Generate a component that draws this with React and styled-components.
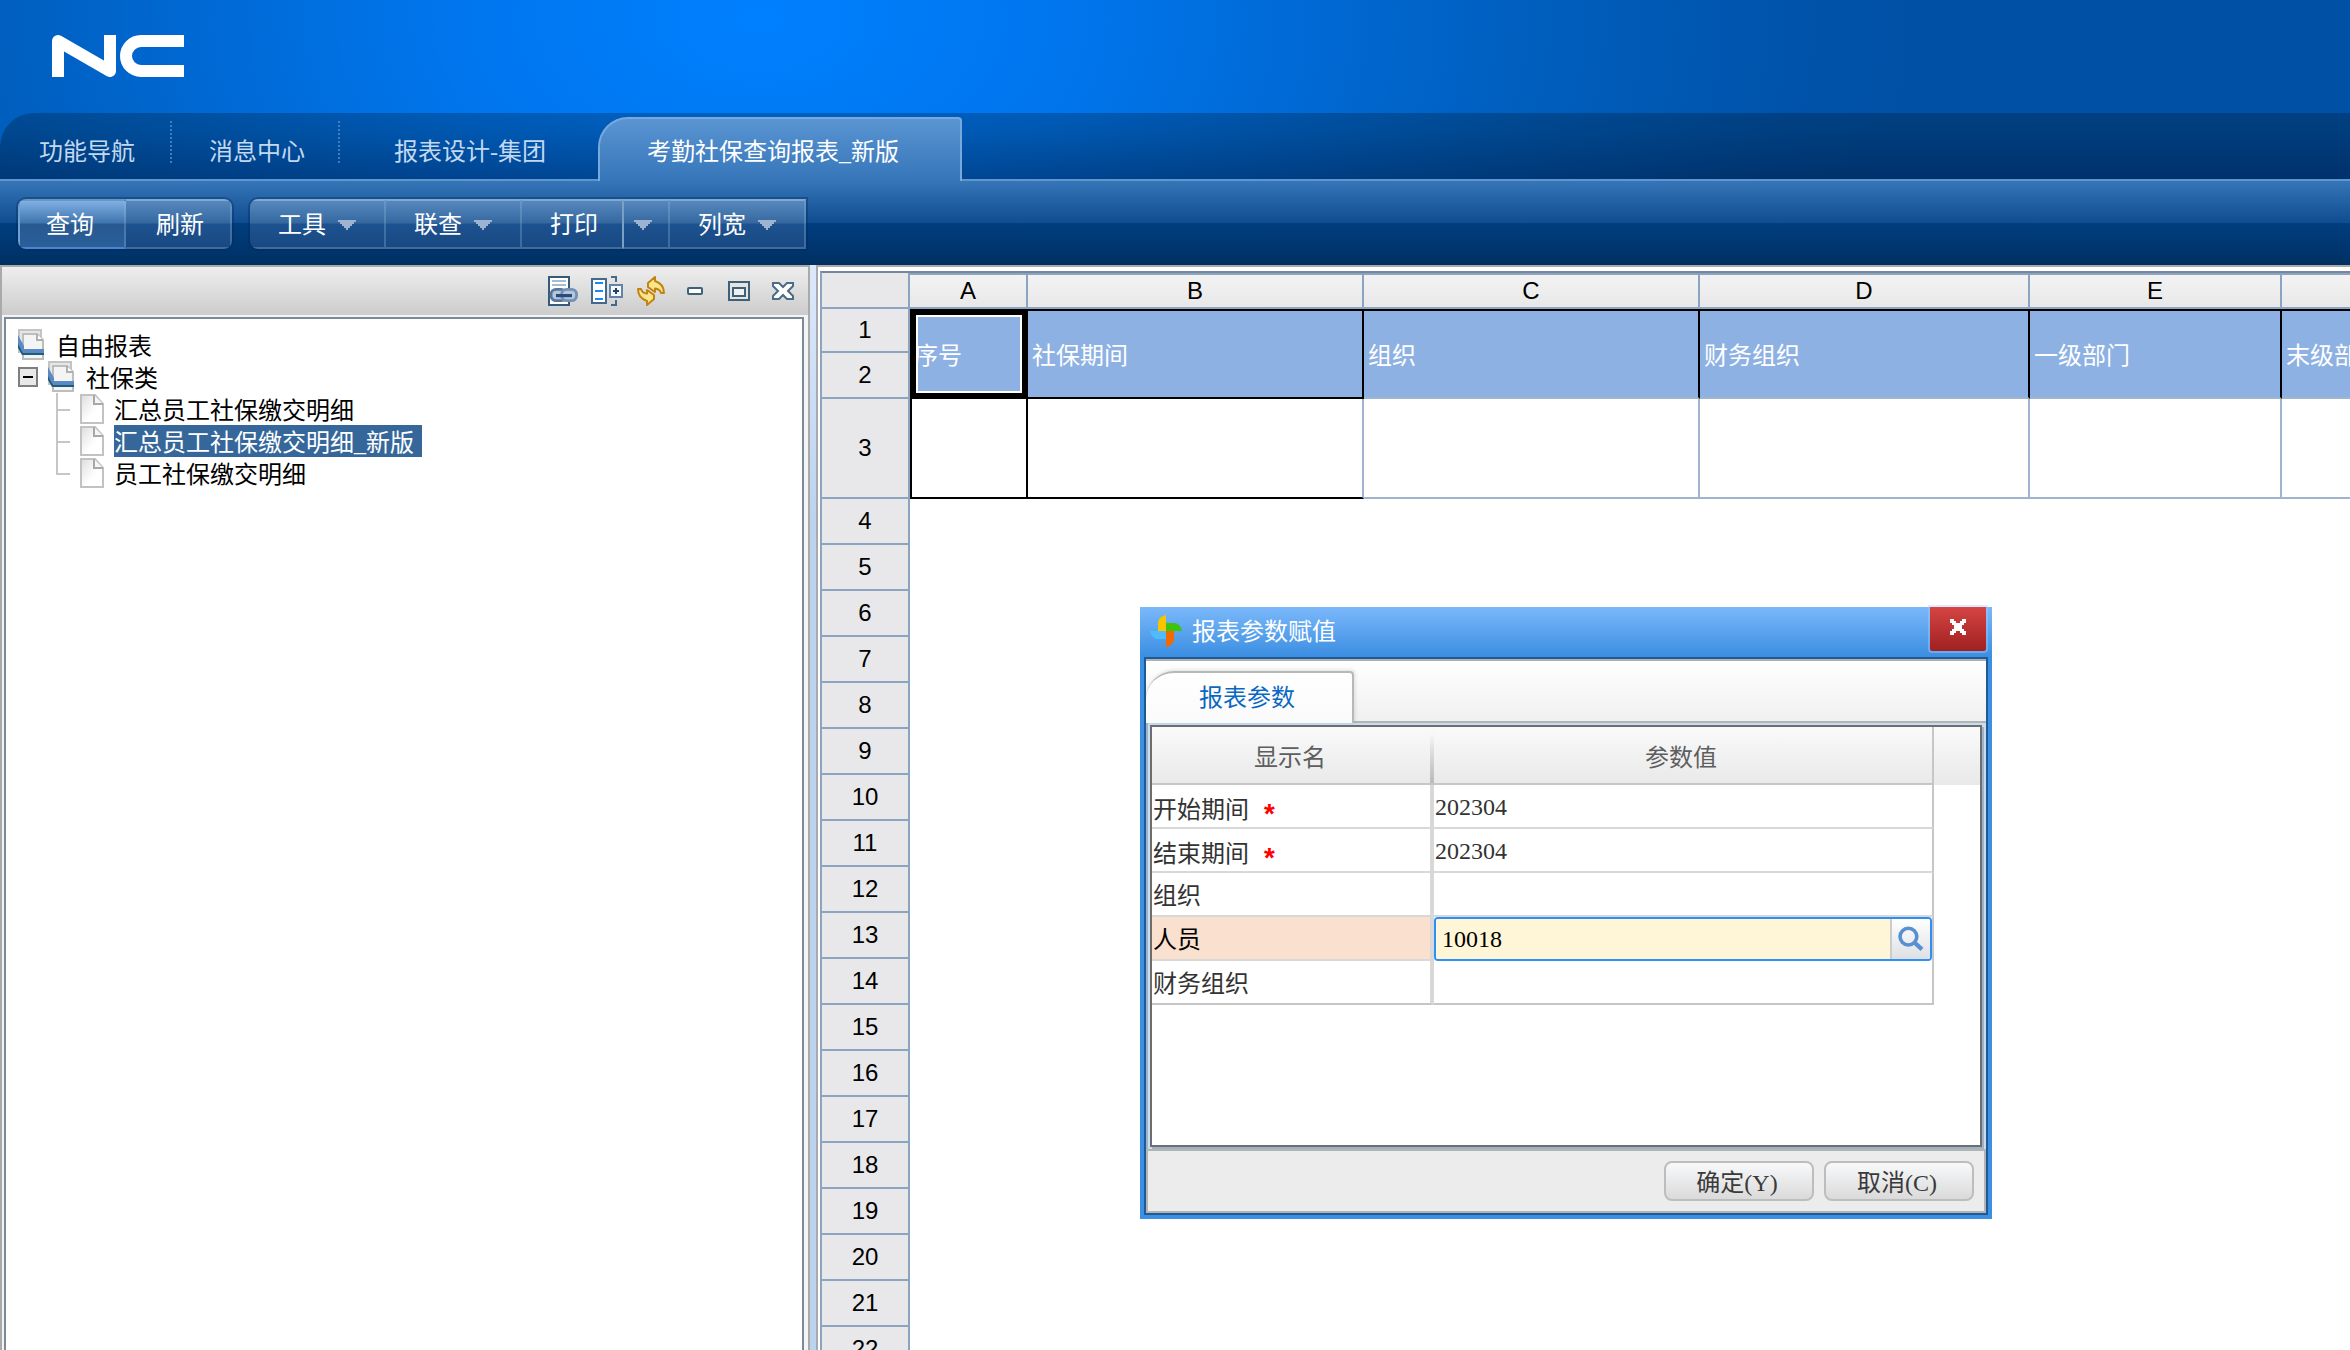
import React, { useState } from 'react';
import styled, { createGlobalStyle, css } from 'styled-components';

const TABS = [
  { label: '功能导航', width: 172 },
  { label: '消息中心', width: 168 },
  { label: '报表设计-集团', width: 258 },
];

const COLUMNS = [
  { id: 'A', width: 118, title: '序号' },
  { id: 'B', width: 336, title: '社保期间' },
  { id: 'C', width: 336, title: '组织' },
  { id: 'D', width: 330, title: '财务组织' },
  { id: 'E', width: 252, title: '一级部门' },
  { id: 'F', width: 252, title: '末级部门' },
];

const EMPTY_ROWS = Array.from({ length: 20 }, (_, i) => i + 4);

const REPORTS = ['汇总员工社保缴交明细', '汇总员工社保缴交明细_新版', '员工社保缴交明细'];

const PARAMS = [
  { name: '开始期间', value: '202304', required: true },
  { name: '结束期间', value: '202304', required: true },
  { name: '组织', value: '' },
  { name: '人员', value: '10018', editing: true },
  { name: '财务组织', value: '' },
];

function Logo() {
  return (
    <svg width="132" height="42" viewBox="0 0 132 42" role="img" aria-label="NC">
      <g fill="none" stroke="#fff" strokeWidth="12" strokeLinejoin="round">
        <path d="M6 42V6L58 36V0" />
        <path d="M132 6H89A15 15 0 0 0 89 36H132" />
      </g>
    </svg>
  );
}

function Arrow() {
  return (
    <svg width="18" height="10" viewBox="0 0 9 5" shapeRendering="crispEdges" aria-hidden="true">
      <path d="M0 0h9v1h-1v1h-1v1h-1v1h-1v1h-1v-1h-1v-1h-1v-1h-1v-1h-1z" fill="#9db3d0" />
    </svg>
  );
}

function LinkDocIcon() {
  return (
    <svg width="30" height="30" viewBox="0 0 15 15" aria-hidden="true">
      <path d="M.5 .5h10v14h-10z" fill="#fff" stroke="#365a7c" />
      <path d="M2 2.5h7M2 4.5h7" stroke="#a9bccb" />
      <rect x="1.5" y="6.700" width="7.500" height="5.600" rx="2.500" fill="#b4c6da" stroke="#56779c" strokeWidth="1.400" />
      <rect x="6.800" y="6.700" width="7.500" height="5.600" rx="2.500" fill="#b4c6da" stroke="#7291b4" strokeWidth="1.400" />
      <path d="M4 9.800h8" stroke="#294b78" strokeWidth="1.600" />
    </svg>
  );
}

function ColumnsIcon() {
  return (
    <svg width="32" height="30" viewBox="0 0 16 15" shapeRendering="crispEdges" aria-hidden="true">
      <path d="M.5 1.5h7v12h-7z" fill="#fff" stroke="#45698c" />
      <path d="M2 3.500h4M2 7.500h4M2 11.500h4" stroke="#1b87fb" />
      <path d="M10 .5h2.500v2.500M12.500 12v2.500h-2.500" fill="none" stroke="#45698c" />
      <path d="M9.500 4.500h6v6h-6z" fill="#f3f6fa" stroke="#6284a8" />
      <path d="M11 7.500h3M12.500 6v3" stroke="#24435f" />
    </svg>
  );
}

function RefreshIcon() {
  return (
    <svg width="28" height="30" viewBox="0 0 14 15" aria-hidden="true">
      <g fill="#fde58c" stroke="#c18312" strokeWidth="1" strokeLinejoin="round">
        <path d="M5.500 3.500L9 .5V2.500Q13.500 4 13.500 8.500H12Q11.500 6.500 9 6.200V8L5.500 5.500Z" />
        <path d="M8.500 11.500L5 14.500V12.500Q.5 11 .5 6.500H2Q2.500 8.500 5 8.800V7L8.500 9.500Z" />
      </g>
    </svg>
  );
}

function MinimizeIcon() {
  return (
    <svg width="16" height="8" viewBox="0 0 8 4" aria-hidden="true">
      <rect x=".5" y=".5" width="7" height="3" rx=".5" fill="#fff" stroke="#3f6079" />
    </svg>
  );
}

function MaximizeIcon() {
  return (
    <svg width="22" height="20" viewBox="0 0 11 10" shapeRendering="crispEdges" aria-hidden="true">
      <path d="M.5 .5h10v9h-10z" fill="#e4e4e4" stroke="#3f6079" />
      <path d="M2.500 3.500h6v4h-6z" fill="#f0f0f0" stroke="#3f6079" />
    </svg>
  );
}

function ClosePaneIcon() {
  return (
    <svg width="22" height="18" viewBox="0 0 11 9" aria-hidden="true">
      <path
        d="M.5 .5H3.500L5.500 2.500L7.500 .5H10.500V2L8 4.500L10.500 7V8.500H7.500L5.500 6.500L3.500 8.500H.5V7L3 4.500L.5 2Z"
        fill="#fff"
        stroke="#4b6c88"
      />
    </svg>
  );
}

function FolderIcon() {
  return (
    <svg width="28" height="32" viewBox="0 0 14 16" aria-hidden="true">
      <path d="M.5 .5h11v11h-11z" fill="#e6e6e6" stroke="#c4c4c4" />
      <path d="M2.500 2.500h7l3 3v9.500h-10z" fill="#f4f4f4" stroke="#bdbdbd" />
      <path d="M9.500 2.500v3h3" fill="#fff" stroke="#b0b0b0" />
      <path d="M0 3L3 8.500V10H13V12.300H2L0 8Z" fill="#5a8ac6" />
      <path d="M0 7.500L2.500 12H13V13H2L0 9.500Z" fill="#1f5d7a" />
    </svg>
  );
}

function DocIcon() {
  return (
    <svg width="24" height="30" viewBox="0 0 12 15" aria-hidden="true">
      <defs>
        <linearGradient id="paper" x1="0" y1="0" x2="1" y2="1">
          <stop offset="0" stopColor="#dedede" />
          <stop offset=".6" stopColor="#fff" />
        </linearGradient>
      </defs>
      <path d="M.5 .5h7l4 4.500v9.500h-11z" fill="url(#paper)" stroke="#c2c2c2" />
      <path d="M7 .5v4.500h4.500" fill="#f5f5f5" stroke="#a8a8a8" />
    </svg>
  );
}

function PinwheelIcon() {
  return (
    <svg width="32" height="32" viewBox="0 0 16 16" aria-hidden="true">
      <path d="M8 0v8H4V4Q4 1 8 0Z" fill="#f6c500" />
      <path d="M16 8H8V4h4Q15 4 16 8Z" fill="#3fc40a" />
      <path d="M8 16V8h4v4Q12 15 8 16Z" fill="#f06a00" />
      <path d="M0 8h8v4H4Q1 12 0 8Z" fill="#4ebcff" />
    </svg>
  );
}

function CloseIcon() {
  return (
    <svg width="16" height="16" viewBox="0 0 8 8" shapeRendering="crispEdges" aria-hidden="true">
      <path
        d="M0 0h2v1h1v1h2v-1h1v-1h2v2h-1v1h-1v2h1v1h1v2h-2v-1h-1v-1h-2v1h-1v1h-2v-2h1v-1h1v-2h-1v-1h-1z"
        fill="#fff"
      />
    </svg>
  );
}

function SearchIcon() {
  return (
    <svg width="26" height="26" viewBox="0 0 13 13" aria-hidden="true">
      <circle cx="5.200" cy="5.300" r="4.200" fill="none" stroke="#5791d2" strokeWidth="1.800" />
      <path d="M8.500 8.500L12 11.700" stroke="#5791d2" strokeWidth="2.200" />
    </svg>
  );
}

function ParamValue({ param }) {
  const [value, setValue] = useState(param.value);
  if (!param.editing) {
    return <ValueCell>{value}</ValueCell>;
  }
  return (
    <ValueCell $editing>
      <SearchField>
        <input id="param-editing" value={value} onChange={(e) => setValue(e.target.value)} />
        <button type="button" aria-label="参照">
          <SearchIcon />
        </button>
      </SearchField>
    </ValueCell>
  );
}

function ParamDialog() {
  return (
    <Dialog role="dialog" aria-labelledby="dialog-title">
      <TitleBar>
        <PinwheelIcon />
        <h2 id="dialog-title">报表参数赋值</h2>
        <CloseButton type="button" aria-label="关闭">
          <CloseIcon />
        </CloseButton>
      </TitleBar>
      <DialogContent>
        <DialogTabs>
          <DialogTab type="button">报表参数</DialogTab>
        </DialogTabs>
        <TableFrame>
          <TableBox>
            <ParamTable>
              <colgroup>
                <col style={{ width: 282 }} />
                <col />
                <col style={{ width: 46 }} />
              </colgroup>
              <thead>
                <tr>
                  <ParamHead $divider>显示名</ParamHead>
                  <ParamHead $line>参数值</ParamHead>
                  <ParamHead $blank aria-hidden="true" />
                </tr>
              </thead>
              <tbody>
                {PARAMS.map((param) => (
                  <tr key={param.name}>
                    <NameCell $editing={param.editing} $required={param.required}>
                      {param.editing ? <label htmlFor="param-editing">{param.name}</label> : param.name}
                      {param.required && <Required>*</Required>}
                    </NameCell>
                    <ParamValue param={param} />
                  </tr>
                ))}
              </tbody>
            </ParamTable>
          </TableBox>
        </TableFrame>
        <Footer>
          <FooterButton type="button">确定(Y)</FooterButton>
          <FooterButton type="button">取消(C)</FooterButton>
        </Footer>
      </DialogContent>
    </Dialog>
  );
}

function Sheet() {
  return (
    <SheetTable>
      <colgroup>
        <col style={{ width: 88 }} />
        {COLUMNS.map((col) => (
          <col key={col.id} style={{ width: col.width }} />
        ))}
      </colgroup>
      <thead>
        <tr>
          <RowHead as="td" $height={34} />
          {COLUMNS.map((col) => (
            <ColHead key={col.id}>{col.id}</ColHead>
          ))}
        </tr>
      </thead>
      <tbody>
        <tr>
          <RowHead $height={44}>1</RowHead>
          {COLUMNS.map((col, i) => (
            <TitleCell key={col.id} rowSpan={2} $selected={i === 0} $dark={i < 2}>
              {col.title}
            </TitleCell>
          ))}
        </tr>
        <tr>
          <RowHead $height={46}>2</RowHead>
        </tr>
        <tr>
          <RowHead $height={100}>3</RowHead>
          {COLUMNS.map((col, i) => (
            <DataCell key={col.id} $first={i === 0} $dark={i < 2} $darkRight={i === 0} />
          ))}
        </tr>
        {EMPTY_ROWS.map((n) => (
          <tr key={n}>
            <RowHead $height={46}>{n}</RowHead>
          </tr>
        ))}
      </tbody>
    </SheetTable>
  );
}

function App() {
  return (
    <Page>
      <GlobalStyle />
      <Header>
        <Brand>
          <Logo />
        </Brand>
        <TabBar>
          {TABS.map((tab, i) => (
            <Tab key={tab.label} type="button" $width={tab.width} $divider={i < 2}>
              {tab.label}
            </Tab>
          ))}
          <ActiveTab type="button">考勤社保查询报表_新版</ActiveTab>
        </TabBar>
      </Header>
      <Toolbar>
        <ButtonGroup $closed>
          <ToolButton type="button" $primary>
            查询
          </ToolButton>
          <ToolButton type="button" $last>
            刷新
          </ToolButton>
        </ButtonGroup>
        <ButtonGroup>
          <ToolButton type="button">
            工具
            <Arrow />
          </ToolButton>
          <ToolButton type="button">
            联查
            <Arrow />
          </ToolButton>
          <ToolButton type="button" $bright>
            打印
          </ToolButton>
          <ToolButton type="button" $narrow aria-label="打印选项">
            <Arrow />
          </ToolButton>
          <ToolButton type="button">
            列宽
            <Arrow />
          </ToolButton>
        </ButtonGroup>
      </Toolbar>
      <Workspace>
        <SidePane>
          <PaneBar>
            <IconButton type="button" aria-label="链接">
              <LinkDocIcon />
            </IconButton>
            <IconButton type="button" aria-label="展开">
              <ColumnsIcon />
            </IconButton>
            <IconButton type="button" aria-label="刷新">
              <RefreshIcon />
            </IconButton>
            <IconButton type="button" aria-label="最小化">
              <MinimizeIcon />
            </IconButton>
            <IconButton type="button" aria-label="最大化">
              <MaximizeIcon />
            </IconButton>
            <IconButton type="button" aria-label="关闭">
              <ClosePaneIcon />
            </IconButton>
          </PaneBar>
          <Tree>
            <TreeRow>
              <FolderIcon />
              <TreeLabel>自由报表</TreeLabel>
            </TreeRow>
            <TreeRow>
              <Expander type="button" aria-label="收起" />
              <FolderIcon />
              <TreeLabel>社保类</TreeLabel>
            </TreeRow>
            {REPORTS.map((name, i) => (
              <TreeRow key={name} $leaf>
                <Branch $last={i === REPORTS.length - 1} />
                <DocIcon />
                <TreeLabel $selected={i === 1}>{name}</TreeLabel>
              </TreeRow>
            ))}
          </Tree>
        </SidePane>
        <Splitter />
        <SheetPane>
          <Sheet />
        </SheetPane>
      </Workspace>
      <ParamDialog />
    </Page>
  );
}

export default App;

const GlobalStyle = createGlobalStyle`
  * {
    box-sizing: border-box;
  }

  body {
    margin: 0;
    font-family: 'Liberation Serif', 'Noto Sans CJK SC', sans-serif;
    font-size: 24px;
    line-height: 32px;
    color: #000;
  }

  button, input {
    margin: 0;
    padding: 0;
    border: 0;
    background: none;
    font: inherit;
    color: inherit;
  }

  svg {
    display: block;
    flex-shrink: 0;
  }
`;

const Page = styled.div`
  position: relative;
  display: flex;
  flex-direction: column;
  height: 100vh;
  overflow: hidden;
  background: #fff;
`;

const Header = styled.header`
  flex-shrink: 0;
  background: radial-gradient(1150px 700px at 760px 20px, #0080ff, #0075ec 28%, #0068d2 50%, #005fbf 66%, #0053aa 90%, #0051a6);
`;

const Brand = styled.div`
  height: 113px;
  padding: 35px 52px;
`;

const TabBar = styled.nav`
  display: flex;
  align-items: flex-end;
  height: 66px;
  border-radius: 34px 0 0 0;
  background: linear-gradient(rgba(0, 0, 0, 0.22), rgba(0, 0, 0, 0.25) 30%, rgba(0, 8, 30, 0.43));
`;

const Tab = styled.button`
  width: ${({ $width }) => $width}px;
  height: 66px;
  padding: 12px 0 0 2px;
  color: #c3d9f0;
  ${({ $divider }) =>
    $divider &&
    css`
      background: repeating-linear-gradient(transparent 0 2px, #3f7fc0 2px 4px) right 6px / 2px 46px no-repeat;
    `}
`;

const ActiveTab = styled.button`
  position: relative;
  width: 364px;
  height: 64px;
  margin-bottom: -2px;
  padding: 4px 14px 0 0;
  border: 2px solid #77a9dd;
  border-bottom: 0;
  border-radius: 30px 4px 0 0;
  background: linear-gradient(#5a95d3, #3575b8);
  color: #fff;
`;

const Toolbar = styled.div`
  display: flex;
  flex-shrink: 0;
  gap: 18px;
  height: 86px;
  padding: 18px 18px 16px;
  border-top: 2px solid #5f96cf;
  background: linear-gradient(#3575b8, #0f4c90 50%, #003e80 50%, #003062);
`;

const ButtonGroup = styled.div`
  display: flex;
  height: 50px;
  overflow: hidden;
  border-radius: ${({ $closed }) => ($closed ? '8px' : '8px 0 0 8px')};
  outline: 2px solid rgba(0, 40, 90, 0.35);
  background: linear-gradient(#5a8bc0, #34689f 48%, #1d5290 50%, #184880);
`;

const ToolButton = styled.button`
  display: flex;
  align-items: center;
  justify-content: center;
  gap: 12px;
  padding: 2px 28px 0;
  border: 2px solid rgba(150, 190, 225, 0.3);
  border-top-color: rgba(150, 190, 225, 0.6);
  border-left: 0;
  color: #fff;
  ${({ $last }) =>
    $last &&
    css`
      padding: 2px 26px 0 30px;
    `}
  ${({ $narrow }) =>
    $narrow &&
    css`
      padding: 2px 16px 0 10px;
    `}
  ${({ $bright }) =>
    $bright &&
    css`
      padding: 2px 24px 0 28px;
      border-right-color: #7ba0c8;
    `}
  ${({ $primary }) =>
    $primary &&
    css`
      padding: 2px 30px 0 26px;
      border-left: 2px solid #6f9fd0;
      border-bottom-color: #4a86c8;
      background: linear-gradient(#7fb0e4, #3f74ad 48%, #28598f 50%, #2a5f9c);
    `}
`;

const Workspace = styled.main`
  display: flex;
  flex: 1;
  min-height: 0;
`;

const SidePane = styled.aside`
  display: flex;
  flex-direction: column;
  flex-shrink: 0;
  width: 810px;
  border: 2px solid #aaa;
  border-bottom: 0;
  background: #f2f4f6;
`;

const PaneBar = styled.div`
  display: flex;
  align-items: center;
  justify-content: flex-end;
  gap: 14px;
  height: 48px;
  padding: 0 10px;
  background: linear-gradient(#eee, #ccc);
`;

const IconButton = styled.button`
  display: flex;
  align-items: center;
  justify-content: center;
  width: 30px;
  height: 32px;
`;

const Tree = styled.ul`
  flex: 1;
  margin: 2px 4px 0 2px;
  padding: 10px 12px;
  border: 2px solid #7c8a98;
  border-bottom: 0;
  background: #fff;
  list-style: none;
`;

const TreeRow = styled.li`
  display: flex;
  align-items: center;
  gap: 10px;
  height: 32px;
  padding-left: ${({ $leaf }) => ($leaf ? 38 : 0)}px;
`;

const TreeLabel = styled.span`
  height: 32px;
  padding: 2px 8px 0 0;
  ${({ $selected }) =>
    $selected &&
    css`
      background: #36679a;
      color: #fff;
    `}
`;

const Expander = styled.button`
  width: 20px;
  height: 20px;
  border: 2px solid #7f7f7f;
  background: linear-gradient(#000, #000) center / 10px 2px no-repeat #e8e8e8;
`;

const Branch = styled.span`
  align-self: flex-start;
  width: 14px;
  height: ${({ $last }) => ($last ? 18 : 32)}px;
  border-left: 2px solid #c6c6c6;
  background: linear-gradient(#c6c6c6, #c6c6c6) 0 16px / 14px 2px no-repeat;
`;

const Splitter = styled.div`
  flex-shrink: 0;
  width: 6px;
  background: linear-gradient(#dce9fb, #bcd3ee 260px);
`;

const SheetPane = styled.section`
  flex: 1;
  min-width: 0;
  overflow: hidden;
  padding: 4px 0 0 2px;
  border: solid #aaa;
  border-width: 2px 0 0 2px;
`;

const SheetTable = styled.table`
  width: 1714px;
  border-top: 2px solid #76879a;
  border-left: 2px solid #8ba5c0;
  border-spacing: 0;
  table-layout: fixed;

  th, td {
    padding: 0;
    white-space: nowrap;
  }
`;

const RowHead = styled.th`
  height: ${({ $height }) => $height}px;
  border-right: 2px solid #8ba5c0;
  border-bottom: 2px solid #8ba5c0;
  background: #e8e8ea;
  font-family: 'Liberation Sans', sans-serif;
  font-weight: 400;
`;

const ColHead = styled(RowHead)`
  height: 36px;
  border-top: 2px solid #8ba5c0;
  background: linear-gradient(#f3f3f3, #e8e8e8);
`;

const TitleCell = styled.td`
  position: relative;
  border: solid #000;
  border-width: 2px 2px 2px 0;
  border-bottom-color: ${({ $dark }) => ($dark ? '#000' : '#9db5cf')};
  background: #8db1e2;
  color: #fff;

  && {
    padding: 4px 4px 0;
  }

  ${({ $selected }) =>
    $selected &&
    css`
      &::after {
        content: '';
        position: absolute;
        inset: -2px -2px -2px 0;
        border: 6px solid #000;
        box-shadow: inset 0 0 0 2px #fff;
      }
    `}
`;

const DataCell = styled.td`
  border-right: 2px solid ${({ $darkRight }) => ($darkRight ? '#000' : '#9db5cf')};
  border-bottom: 2px solid ${({ $dark }) => ($dark ? '#000' : '#9db5cf')};
  border-left: ${({ $first }) => ($first ? '2px solid #000' : '0')};
`;

const Dialog = styled.div`
  position: absolute;
  top: 607px;
  left: 1140px;
  width: 852px;
  padding: 0 4px 4px;
  background: linear-gradient(#7bb8fa, #3b8ee2) top / 100% 50px no-repeat #3d8fe2;
`;

const TitleBar = styled.div`
  display: flex;
  align-items: center;
  gap: 10px;
  height: 50px;
  padding: 0 2px 2px 6px;

  h2 {
    flex: 1;
    margin: 0;
    padding-top: 2px;
    font-size: 24px;
    font-weight: 400;
    color: #fff;
  }
`;

const CloseButton = styled.button`
  display: flex;
  align-items: center;
  justify-content: center;
  align-self: flex-start;
  width: 56px;
  height: 44px;
  padding-bottom: 4px;
  border-radius: 0 0 2px 2px;
  outline: 2px solid rgba(170, 205, 250, 0.4);
  background: linear-gradient(#d64444, #a02020);
`;

const DialogContent = styled.div`
  border: 2px solid #1c5a98;
  background: #fff;
`;

const DialogTabs = styled.div`
  display: flex;
  align-items: flex-end;
  height: 64px;
  border-top: 2px solid #b0b0b0;
  border-bottom: 2px solid #b4b4b4;
  background: linear-gradient(#fff, #f0f0f0);
`;

const DialogTab = styled.button`
  width: 208px;
  height: 52px;
  margin-bottom: -2px;
  padding-right: 4px;
  border: solid #b8b8b8;
  border-width: 2px 2px 0 0;
  border-radius: 28px 4px 0 0;
  background: linear-gradient(#fff, #fafafa);
  box-shadow: 1px -1px 4px rgba(0, 0, 0, 0.12);
  color: #0a68c2;
`;

const TableFrame = styled.div`
  padding: 2px;
  border-left: 2px solid #9fb2c6;
  background: #c9dcf0;
`;

const TableBox = styled.div`
  height: 422px;
  margin-right: 2px;
  border: 2px solid #6e6e6e;
  background: #fff;
  box-shadow: 2px 2px #9fb2c6;
`;

const ParamTable = styled.table`
  width: 100%;
  border-spacing: 0;
  table-layout: fixed;
  color: #333;
`;

const ParamHead = styled.th`
  height: 58px;
  padding: 6px 4px 0 0;
  border-bottom: ${({ $blank }) => ($blank ? '0' : '2px solid #c6c6c6')};
  border-right: ${({ $line }) => ($line ? '2px solid #c6c6c6' : '0')};
  background: linear-gradient(#fafafa, #e9e9e9);
  font-weight: 400;
  color: #5e5e5e;
  ${({ $divider }) =>
    $divider &&
    css`
      padding-right: 6px;
      background:
        linear-gradient(rgba(187, 187, 187, 0) 6px, #bbb) right / 4px 100% no-repeat,
        linear-gradient(#fafafa, #e9e9e9);
    `}
`;

const NameCell = styled.td`
  height: 44px;
  padding: ${({ $required }) => ($required ? '10px 0 0 1px' : '3px 0 0 1px')};
  border-right: 4px solid #d8d8d8;
  border-bottom: 2px solid #d8d8d8;
  line-height: 30px;

  tr:last-child > & {
    border-bottom-color: #c6c6c6;
  }

  ${({ $editing }) =>
    $editing &&
    css`
      background: #fae0cf;
      background-clip: padding-box;
      color: #000;
    `}
`;

const Required = styled.span`
  margin-left: 12px;
  font-family: 'Liberation Mono', monospace;
  font-size: 28px;
  font-weight: 700;
  vertical-align: -6px;
  line-height: 20px;
  color: #f00;
`;

const ValueCell = styled.td`
  height: 44px;
  padding: ${({ $editing }) => ($editing ? '0' : '2px 0 0 1px')};
  border-right: 2px solid #c6c6c6;
  border-bottom: ${({ $editing }) => ($editing ? '0' : '2px solid #d8d8d8')};
  line-height: 30px;

  tr:last-child > & {
    border-bottom-color: #c6c6c6;
  }
`;

const SearchField = styled.div`
  display: flex;
  height: 44px;
  overflow: hidden;
  border: 2px solid #2e8ff5;
  border-radius: 4px;

  input {
    flex: 1;
    min-width: 0;
    padding: 0 6px;
    outline: 0;
    background: #fef6d6;
    color: #000;
  }

  button {
    display: flex;
    align-items: center;
    justify-content: center;
    width: 40px;
    border-left: 2px solid #ccc;
    background: linear-gradient(#fff, #dfe0e4);
  }
`;

const Footer = styled.div`
  display: flex;
  justify-content: flex-end;
  gap: 10px;
  padding: 10px;
  border: 2px solid #b4b4b4;
  background: #ececec;
`;

const FooterButton = styled.button`
  width: 150px;
  height: 40px;
  padding: 3px 4px 0 0;
  border: 2px solid #bdbdbd;
  border-radius: 8px;
  background: linear-gradient(#f8f9fb, #dadada);
  color: #3a3a3a;
`;
